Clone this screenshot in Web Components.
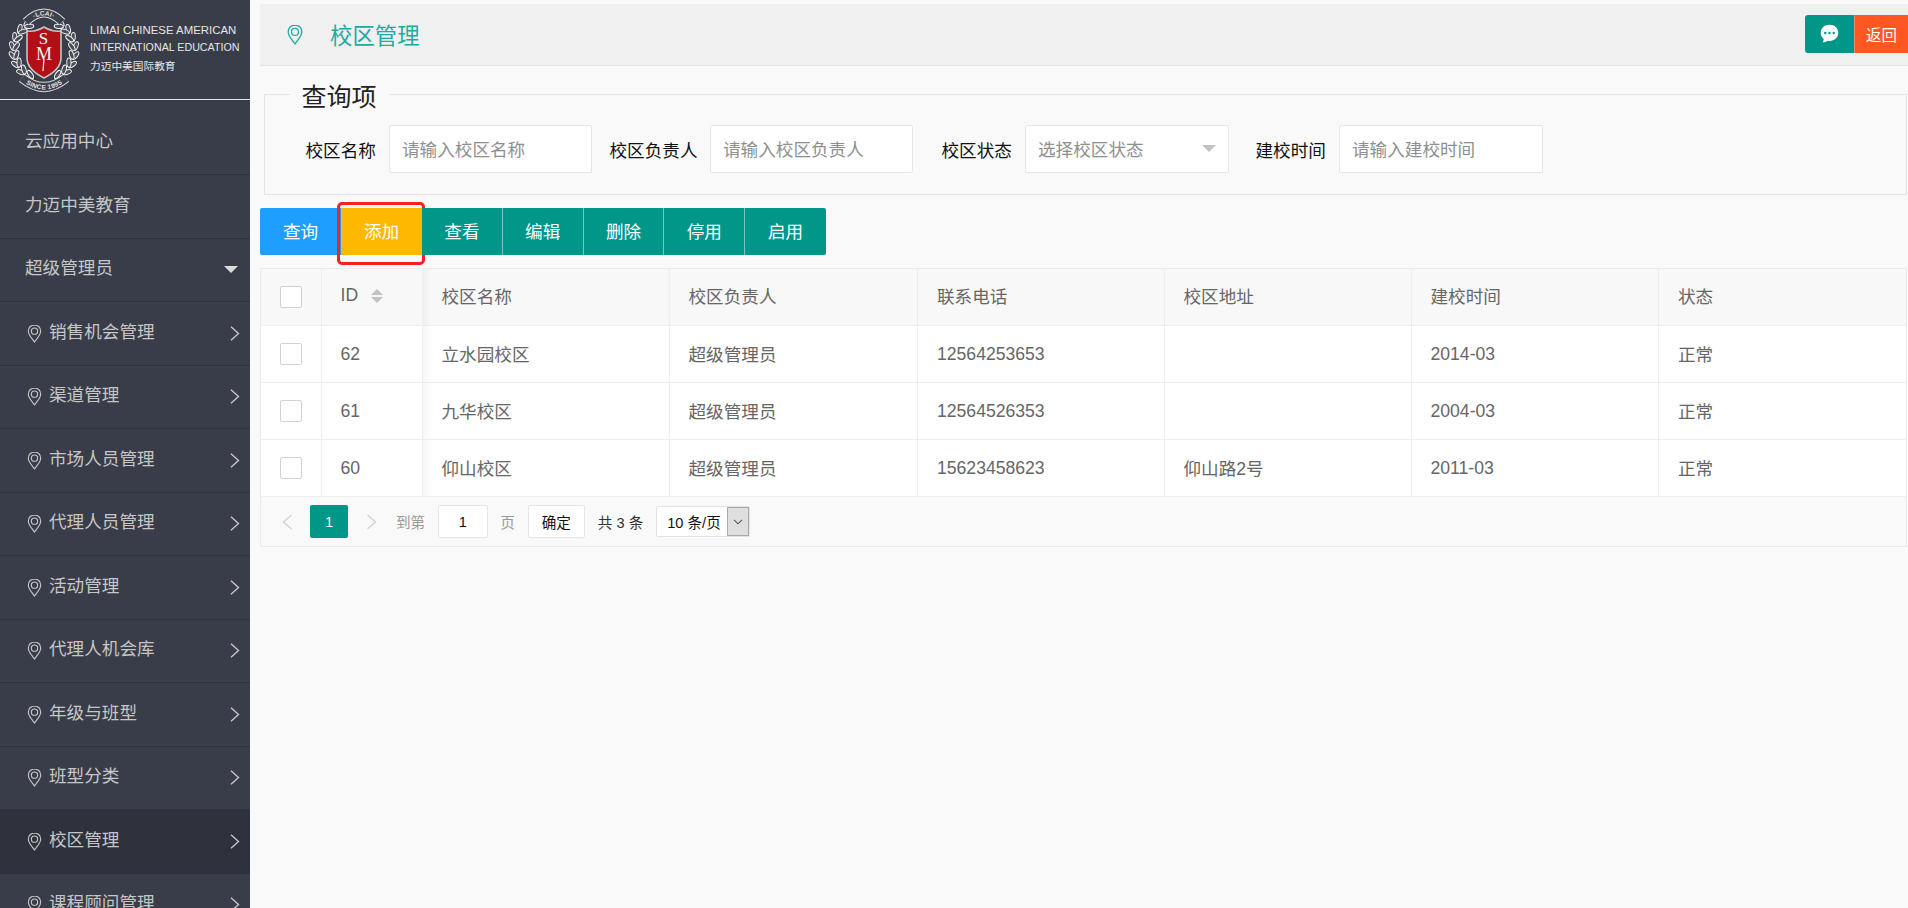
<!DOCTYPE html>
<html lang="zh-CN">
<head>
<meta charset="utf-8">
<title>校区管理</title>
<style>
    html, body {
        margin: 0;
        height: 100%;
        overflow: hidden;
        background: #f9f9f9;
        font-family: "Liberation Sans", "Noto Sans CJK SC", sans-serif;
    }
    #app {
        display: flex;
        height: 908px;
    }
</style>
</head>
<body>
<div id="app">
    <side-bar>
        <nav-item>云应用中心</nav-item>
        <nav-item>力迈中美教育</nav-item>
        <nav-item kind="group">超级管理员</nav-item>
        <nav-item kind="link">销售机会管理</nav-item>
        <nav-item kind="link">渠道管理</nav-item>
        <nav-item kind="link">市场人员管理</nav-item>
        <nav-item kind="link">代理人员管理</nav-item>
        <nav-item kind="link">活动管理</nav-item>
        <nav-item kind="link">代理人机会库</nav-item>
        <nav-item kind="link">年级与班型</nav-item>
        <nav-item kind="link">班型分类</nav-item>
        <nav-item kind="link" active>校区管理</nav-item>
        <nav-item kind="link">课程顾问管理</nav-item>
    </side-bar>
    <main-panel>
        <page-header>校区管理</page-header>
        <query-panel legend="查询项">
            <query-field label="校区名称" label-width="71" input-width="203" style="margin-left:41px">请输入校区名称</query-field>
            <query-field label="校区负责人" label-width="88" input-width="203" style="margin-left:17.500px">请输入校区负责人</query-field>
            <query-field label="校区状态" label-width="71" input-width="204" select style="margin-left:28.500px">选择校区状态</query-field>
            <query-field label="建校时间" label-width="71" input-width="204" style="margin-left:26.500px">请输入建校时间</query-field>
        </query-panel>
        <tool-bar>
            <tool-button color="#1e9fff">查询</tool-button>
            <tool-button color="#ffb800" marked>添加</tool-button>
            <tool-button>查看</tool-button>
            <tool-button>编辑</tool-button>
            <tool-button>删除</tool-button>
            <tool-button>停用</tool-button>
            <tool-button>启用</tool-button>
        </tool-bar>
        <campus-table>
            <table-pager slot="pager"></table-pager>
        </campus-table>
    </main-panel>
</div>

<script>
const PIN_SVG = `<svg viewBox="0 0 15 20" fill="none" stroke="currentColor" stroke-width="1.2">
    <path d="M7.5 1C3.7 1 1 3.9 1 7.5c0 3.9 3.9 7.6 6.5 11.5C10.100 15.100 14 11.400 14 7.500 14 3.900 11.300 1 7.500 1z"/>
    <circle cx="7.500" cy="7.500" r="3.300"/>
</svg>`;

class SideBar extends HTMLElement {
    constructor() {
        super();
        this.attachShadow({ mode: "open" });
    }
    connectedCallback() {
        this.shadowRoot.innerHTML = this.shadowRootInnerHtml();
        this.shadowRoot.querySelector("#leaves").innerHTML = this.wreathLeaves();
    }
    wreathLeaves() {
        // two rows of leaves up each side of the crest
        let out = "";
        [-1, 1].forEach((side) => {
            for (let i = 0; i < 8; i++) {
                const angle = (-58 + i * 17) * Math.PI / 180;
                [[32, 28], [28, -28]].forEach(([radius, tilt]) => {
                    const x = 44 + side * radius * Math.cos(angle);
                    const y = 50 + radius * Math.sin(angle);
                    const rot = side * (90 + (angle * 180 / Math.PI) + tilt);
                    out += `<ellipse cx="${x.toFixed(1)}" cy="${y.toFixed(1)}" rx="4.600" ry="2.100" transform="rotate(${rot.toFixed(0)} ${x.toFixed(1)} ${y.toFixed(1)})"/>`;
                });
            }
        });
        return out;
    }
    shadowRootInnerHtml() {
        return `<style>
            :host {
                display: block;
                flex: 0 0 250px;
                width: 250px;
                height: 908px;
                overflow: hidden;
                background: #393d49;
            }
            .brand {
                display: flex;
                align-items: center;
                height: 99px;
                border-bottom: 1px solid #e4e4e4;
                box-sizing: content-box;
            }
            .brand svg {
                flex: 0 0 90px;
                width: 90px;
                height: 99px;
            }
            .brand-text {
                color: #e6e6e6;
                line-height: 17px;
                white-space: nowrap;
                padding-bottom: 1px;
            }
            .brand-text span {
                display: block;
            }
            .brand-text .en1 {
                font-size: 11.400px;
            }
            .brand-text .en2 {
                font-size: 10.700px;
            }
            .brand-text .cn {
                font-size: 10.700px;
                line-height: 20px;
            }
            nav {
                padding-top: 11.500px;
            }
            ::slotted(nav-item) {
                display: flex;
            }
        </style>
        <div class="brand">
            <svg viewBox="0 0 90 99">
                <g id="leaves" fill="#4a4e5a" stroke="#efefef" stroke-width="1"></g>
                <path id="arc-top" d="M26 22Q44 4 62 22" fill="none" stroke="#dcdcdc" stroke-width="9"/>
                <path d="M26 22Q44 4 62 22" fill="none" stroke="#3d414d" stroke-width="7"/>
                <path id="arc-bottom" d="M22 78Q44 96 66 78" fill="none" stroke="#dcdcdc" stroke-width="10"/>
                <path d="M22 78Q44 96 66 78" fill="none" stroke="#3d414d" stroke-width="8"/>
                <text font-family="Liberation Sans" font-size="6.500" font-weight="700" fill="#e4e4e4" letter-spacing=".6"><textPath href="#arc-top" startOffset="50%" text-anchor="middle" dominant-baseline="central">·LCAI·</textPath></text>
                <text font-family="Liberation Sans" font-size="6.500" font-weight="700" fill="#e4e4e4"><textPath href="#arc-bottom" startOffset="50%" text-anchor="middle" dominant-baseline="central">SINCE 1995</textPath></text>
                <path d="M27 31C33 32 39 30 44 27c5 3 11 5 17 4v27c0 9-9 16-17 20-8-4-17-11-17-20z" fill="#b30f17" stroke="#c4c4c4" stroke-width="1.600"/>
                <text x="43.500" y="44" text-anchor="middle" font-family="Liberation Serif" font-size="17" fill="#f2f2f2">S</text>
                <text x="44" y="60" text-anchor="middle" font-family="Liberation Serif" font-size="18" fill="#f2f2f2">M</text>
                <path d="M44 59l-1 12" stroke="#f2f2f2" stroke-width="1.200"/>
            </svg>
            <div class="brand-text"><span class="en1">LIMAI CHINESE AMERICAN</span><span class="en2">INTERNATIONAL EDUCATION</span><span class="cn">力迈中美国际教育</span></div>
        </div>
        <nav><slot></slot></nav>`;
    }
}

class NavItem extends HTMLElement {
    constructor() {
        super();
        this.attachShadow({ mode: "open" });
    }
    connectedCallback() {
        const kind = this.getAttribute("kind");
        let lead = "";
        let tail = "";
        if (kind === "link") {
            lead = `<span class="pin">${PIN_SVG}</span>`;
            tail = `<svg class="chev" viewBox="0 0 10 15" fill="none" stroke="currentColor" stroke-width="1.400"><path d="M1 .8 8.500 7.500 1 14.200"/></svg>`;
        }
        if (kind === "group") {
            tail = `<span class="caret"></span>`;
        }
        this.shadowRoot.innerHTML = `<style>
            :host {
                display: flex;
                align-items: center;
                box-sizing: border-box;
                height: 63.500px;
                padding: 0 10px 6px 25px;
                border-bottom: 1px solid #2e323c;
                color: #c6c6c6;
                font-size: 17.600px;
                white-space: nowrap;
            }
            :host([active]) {
                background: #2f323c;
            }
            .pin {
                display: block;
                width: 15px;
                height: 19px;
                margin: 6px 7.500px 0 1.500px;
                color: #c6c6c6;
            }
            .pin svg {
                display: block;
                width: 100%;
                height: 100%;
            }
            .chev {
                width: 10px;
                height: 15px;
                margin: 6px 0 0 auto;
                color: #c6c6c6;
            }
            .caret {
                margin: 6px 2px 0 auto;
                border-style: solid;
                border-width: 7px 7px 0;
                border-color: #dcdcdc transparent transparent;
            }
        </style>${lead}<slot></slot>${tail}`;
    }
}

class MainPanel extends HTMLElement {
    constructor() {
        super();
        this.attachShadow({ mode: "open" });
        this.shadowRoot.innerHTML = `<style>
            :host {
                display: block;
                flex: 1;
                min-width: 0;
                padding: 3.500px 0 0 10px;
            }
        </style><slot></slot>`;
    }
}

class PageHeader extends HTMLElement {
    constructor() {
        super();
        this.attachShadow({ mode: "open" });
        this.shadowRoot.innerHTML = `<style>
            :host {
                display: flex;
                align-items: center;
                box-sizing: border-box;
                height: 62.500px;
                padding-left: 27px;
                background: #f0f0f0;
                border-bottom: 1px solid #e4e4e4;
                color: #1faaa3;
                font-size: 22.400px;
            }
            .pin {
                display: block;
                width: 16px;
                height: 21px;
                margin-right: 27px;
            }
            .pin svg {
                display: block;
                width: 100%;
                height: 100%;
            }
            .actions {
                display: flex;
                margin-left: auto;
                height: 38px;
                margin-top: -1px;
            }
            .chat {
                display: flex;
                align-items: center;
                justify-content: center;
                width: 49px;
                background: #009688;
                border-radius: 3px 0 0 3px;
                border-right: 1px solid #f08a6a;
            }
            .back {
                display: flex;
                align-items: center;
                justify-content: center;
                width: 53px;
                background: #ff5722;
                color: #fff;
                font-size: 15.500px;
            }
        </style>
        <span class="pin">${PIN_SVG}</span>
        <slot></slot>
        <div class="actions">
            <span class="chat"><svg width="19" height="19" viewBox="0 0 19 19"><path d="M9.500 .8C4.500.8.700 4.300.700 8.800c0 2.500 1.100 4.600 3 6.100.1 1.500-.5 2.600-1.200 3.400 2 .1 3.600-.6 4.700-1.600.7.200 1.500.3 2.300.3 5 0 8.800-3.500 8.800-8.200S14.500.8 9.500.8z" fill="#fff"/><circle cx="5.300" cy="9" r="1.200" fill="#009688"/><circle cx="9.500" cy="9" r="1.200" fill="#009688"/><circle cx="13.700" cy="9" r="1.200" fill="#009688"/></svg></span>
            <span class="back">返回</span>
        </div>`;
    }
}

class QueryPanel extends HTMLElement {
    constructor() {
        super();
        this.attachShadow({ mode: "open" });
    }
    connectedCallback() {
        this.shadowRoot.innerHTML = `<style>
            :host {
                display: block;
                margin: 0 1px 0 3.500px;
                padding-top: 12.500px;
            }
            fieldset {
                display: flex;
                box-sizing: border-box;
                margin: 0;
                padding: 0;
                height: 116px;
                border: 1px solid #e4e4e4;
                min-width: 0;
            }
            legend {
                margin-left: 25px;
                padding: 4px 12px 0;
                color: #222;
                font-size: 25px;
                line-height: 28px;
            }
            .row {
                display: flex;
                margin-top: -5.500px;
            }
        </style>
        <fieldset>
            <legend></legend>
            <div class="row"><slot></slot></div>
        </fieldset>`;
        this.shadowRoot.querySelector("legend").textContent = this.getAttribute("legend");
    }
}

class QueryField extends HTMLElement {
    constructor() {
        super();
        this.attachShadow({ mode: "open" });
    }
    connectedCallback() {
        this.shadowRoot.innerHTML = `<style>
            :host {
                display: flex;
                align-items: center;
                font-size: 17.600px;
                white-space: nowrap;
            }
            .label {
                color: #111;
                margin-right: 12.500px;
            }
            .box {
                display: flex;
                align-items: center;
                box-sizing: border-box;
                height: 48px;
                padding: 0 12px 2px 12px;
                background: #fff;
                border: 1px solid #e6e6e6;
                border-radius: 2px;
                color: #8f8f8f;
            }
            .arrow {
                margin-left: auto;
                border-style: solid;
                border-width: 7px 7px 0;
                border-color: #c2c2c2 transparent transparent;
            }
        </style>
        <span class="label"></span>
        <div class="box"><slot></slot></div>`;
        this.shadowRoot.querySelector(".label").textContent = this.getAttribute("label");
        this.shadowRoot.querySelector(".label").style.width = this.getAttribute("label-width") + "px";
        const box = this.shadowRoot.querySelector(".box");
        box.style.width = this.getAttribute("input-width") + "px";
        if (this.hasAttribute("select")) {
            const arrow = document.createElement("span");
            arrow.className = "arrow";
            box.appendChild(arrow);
        }
    }
}

class ToolBar extends HTMLElement {
    constructor() {
        super();
        this.attachShadow({ mode: "open" });
        this.shadowRoot.innerHTML = `<style>
            :host {
                display: flex;
                margin-top: 13.500px;
                height: 47px;
            }
        </style><slot></slot>`;
    }
}

class ToolButton extends HTMLElement {
    constructor() {
        super();
        this.attachShadow({ mode: "open" });
    }
    connectedCallback() {
        const color = this.getAttribute("color") || "#009688";
        this.shadowRoot.innerHTML = `<style>
            :host {
                display: flex;
                align-items: center;
                justify-content: center;
                position: relative;
                box-sizing: border-box;
                width: 80.800px;
                padding-bottom: 2px;
                background: ${color};
                color: #fff;
                font-size: 17.600px;
                border-right: 1px solid rgba(255, 255, 255, .45);
            }
            :host(:first-child) {
                border-radius: 2px 0 0 2px;
                border-right: 0;
            }
            :host(:last-child) {
                border-radius: 0 2px 2px 0;
                border-right: 0;
            }
            :host([color]) {
                width: 81px;
                border-right: 0;
            }
            .mark {
                position: absolute;
                left: -4px;
                top: -6px;
                width: 88px;
                height: 63px;
                box-sizing: border-box;
                border: 3px solid #f5231c;
                border-radius: 5px;
            }
        </style><slot></slot>${this.hasAttribute("marked") ? '<span class="mark"></span>' : ""}`;
    }
}

class CampusTable extends HTMLElement {
    constructor() {
        super();
        this.attachShadow({ mode: "open" });
    }
    set rows(rows) {
        this._rows = rows;
    }
    connectedCallback() {
        this.shadowRoot.innerHTML = this.shadowRootInnerHtml();
        const body = this.shadowRoot.querySelector("tbody");
        (this._rows || CAMPUS_ROWS).forEach((row) => {
            const tr = document.createElement("tr");
            tr.innerHTML = `<td><span class="check"></span></td>` + row.map(() => "<td></td>").join("");
            row.forEach((value, i) => {
                const cell = tr.children[i + 1];
                cell.textContent = value;
                // digits sit a little higher than the CJK fallback does
                if (!/^[\d-]*$/.test(value)) cell.className = "cjk";
            });
            body.appendChild(tr);
        });
    }
    shadowRootInnerHtml() {
        return `<style>
            :host {
                display: block;
                box-sizing: border-box;
                width: 1647px;
                margin-top: 12.500px;
                border: 1px solid #eaeaea;
            }
            table {
                display: table;
                width: 100%;
                table-layout: fixed;
                border-collapse: collapse;
                color: #666;
                font-size: 17.600px;
                background: #fff;
            }
            th, td {
                box-sizing: border-box;
                height: 57px;
                padding: 0 19px;
                border: 1px solid #eeeeee;
                border-width: 0 1px 1px 0;
                text-align: left;
                font-weight: 400;
                white-space: nowrap;
            }
            th, td.cjk {
                padding-bottom: 2px;
            }
            th:last-child, td:last-child {
                border-right: 0;
            }
            th {
                background: #f8f8f8;
            }
            th:nth-child(3), td:nth-child(3) {
                background-image: linear-gradient(to right, rgba(0, 0, 0, .035), transparent 9px);
            }
            th:first-child, td:first-child {
                text-align: center;
                padding: 0;
            }
            .check {
                display: inline-block;
                width: 22px;
                height: 22px;
                box-sizing: border-box;
                background: #fff;
                border: 1px solid #d2d2d2;
                border-radius: 2px;
                vertical-align: middle;
            }
            .sort {
                display: inline-block;
                margin-left: 13px;
                vertical-align: -2px;
            }
            .sort i {
                display: block;
                border-style: solid;
                border-color: #c2c2c2 transparent;
                border-width: 0 6px 6.500px;
            }
            .sort i + i {
                border-width: 6.500px 6px 0;
                margin-top: 2px;
            }
        </style>
        <table>
            <colgroup>
                <col style="width:60px"><col style="width:101px"><col style="width:247px">
                <col style="width:248.500px"><col style="width:246.500px"><col style="width:247px">
                <col style="width:247.500px"><col>
            </colgroup>
            <thead>
                <tr>
                    <th><span class="check"></span></th>
                    <th>ID<span class="sort"><i></i><i></i></span></th>
                    <th>校区名称</th>
                    <th>校区负责人</th>
                    <th>联系电话</th>
                    <th>校区地址</th>
                    <th>建校时间</th>
                    <th>状态</th>
                </tr>
            </thead>
            <tbody></tbody>
        </table>
        <slot name="pager"></slot>`;
    }
}

class TablePager extends HTMLElement {
    constructor() {
        super();
        this.attachShadow({ mode: "open" });
        this.shadowRoot.innerHTML = `<style>
            :host {
                display: flex;
                align-items: center;
                box-sizing: border-box;
                height: 49px;
                padding: 0 0 0 21px;
                color: #999;
                font-size: 14.600px;
                white-space: nowrap;
            }
            svg {
                display: block;
                width: 11px;
                height: 16px;
                fill: none;
                stroke: #d2d2d2;
                stroke-width: 1.400;
            }
            .current {
                display: flex;
                align-items: center;
                justify-content: center;
                width: 38px;
                height: 33px;
                margin: 0 18px 0 17px;
                background: #009688;
                border-radius: 2px;
                color: #fff;
            }
            .jump {
                margin-left: 19px;
            }
            .page-input, .ok {
                display: flex;
                align-items: center;
                justify-content: center;
                box-sizing: border-box;
                height: 33px;
                background: #fff;
                border: 1px solid #e6e6e6;
                border-radius: 2px;
                color: #111;
            }
            .page-input {
                width: 50px;
                margin: 0 12.500px;
            }
            .ok {
                width: 57px;
                margin: 0 13px;
            }
            .total {
                color: #333;
            }
            .size {
                display: flex;
                box-sizing: border-box;
                width: 94px;
                height: 31px;
                margin-left: 13px;
                background: #fff;
                border: 1px solid #e2e2e2;
                border-radius: 2px;
                color: #111;
                font-size: 14.600px;
            }
            .size span {
                flex: 1;
                align-self: center;
                padding-left: 10px;
            }
            .size b {
                display: flex;
                align-items: center;
                justify-content: center;
                width: 20px;
                background: #dfdfdf;
                border: 1px solid #ababab;
            }
            .size svg {
                width: 10px;
                height: 6px;
                stroke: #555;
                stroke-width: 1.100;
            }
        </style>
        <svg viewBox="0 0 11 16"><path d="M9.500 1 1.500 8l8 7"/></svg>
        <span class="current">1</span>
        <svg viewBox="0 0 11 16"><path d="M1.500 1l8 7-8 7"/></svg>
        <span class="jump">到第</span>
        <span class="page-input">1</span>
        <span>页</span>
        <span class="ok">确定</span>
        <span class="total">共 3 条</span>
        <div class="size"><span>10 条/页</span><b><svg viewBox="0 0 10 6"><path d="M1 .8 5 4.800 9 .8"/></svg></b></div>`;
    }
}

const CAMPUS_ROWS = [
    ["62", "立水园校区", "超级管理员", "12564253653", "", "2014-03", "正常"],
    ["61", "九华校区", "超级管理员", "12564526353", "", "2004-03", "正常"],
    ["60", "仰山校区", "超级管理员", "15623458623", "仰山路2号", "2011-03", "正常"],
];

customElements.define("side-bar", SideBar);
customElements.define("nav-item", NavItem);
customElements.define("main-panel", MainPanel);
customElements.define("page-header", PageHeader);
customElements.define("query-panel", QueryPanel);
customElements.define("query-field", QueryField);
customElements.define("tool-bar", ToolBar);
customElements.define("tool-button", ToolButton);
customElements.define("campus-table", CampusTable);
customElements.define("table-pager", TablePager);
</script>
</body>
</html>
